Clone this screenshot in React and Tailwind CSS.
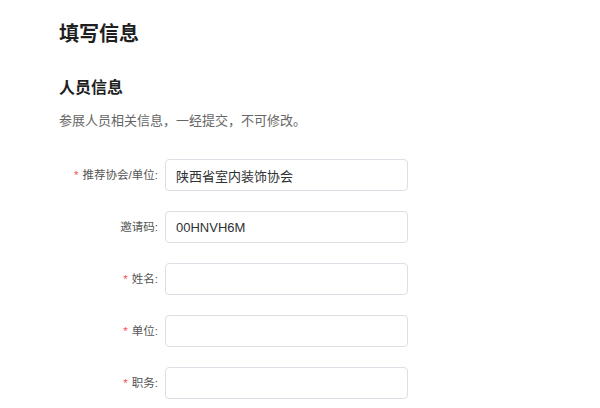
const rows = [
  { label: '推荐协会/单位', required: true, value: '陕西省室内装饰协会' },
  { label: '邀请码', required: false, value: '00HNVH6M' },
  { label: '姓名', required: true, value: '' },
  { label: '单位', required: true, value: '' },
  { label: '职务', required: true, value: '' },
];

const App = () => {
  return (
    <div
      className="min-h-screen bg-white pl-[59px] pt-[20px]"
      style={{ fontFamily: '"Liberation Sans", "Noto Sans CJK SC", sans-serif' }}
    >
      <h1 className="text-[20px] leading-[28px] font-bold text-[#1f1f1f]">填写信息</h1>

      <h2 className="mt-[28px] text-[16px] leading-[24px] font-bold text-[#1f1f1f]">人员信息</h2>
      <p className="mt-[11px] text-[13px] leading-[20px] text-[#666]">
        参展人员相关信息，一经提交，不可修改。
      </p>

      {/* Form */}
      <div className="mt-[28px] flex flex-col gap-[20px]">
        {rows.map((row) => (
          <div key={row.label} className="flex items-center">
            <label className="w-[99px] text-right text-[11.5px] leading-[32px] text-[#555]">
              {row.required && <span className="mr-[4px] text-[#ff4d4f]">*</span>}
              {row.label}:
            </label>
            <input
              readOnly
              value={row.value}
              className="ml-[7px] h-[32px] w-[243px] rounded-[4px] border border-[#dcdfe6] px-[10px] text-[13px] text-[#303133] outline-none"
            />
          </div>
        ))}
      </div>
    </div>
  );
};

export default App;
